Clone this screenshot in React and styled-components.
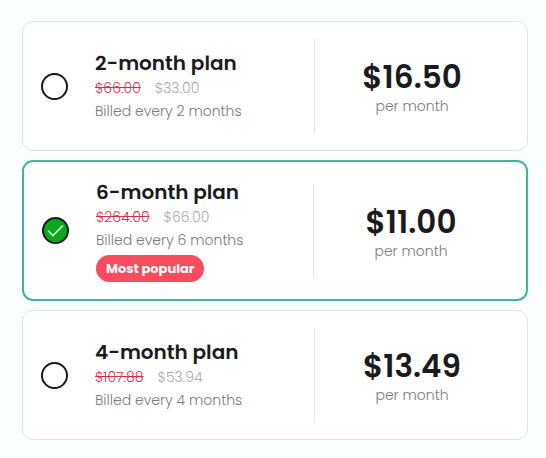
import React, { useState } from "react";
import styled, { createGlobalStyle } from "styled-components";

const plans = [
  { id: "2", title: "2-month plan", old: "$66.00", now: "$33.00", billed: "Billed every 2 months", price: "$16.50" },
  { id: "6", title: "6-month plan", old: "$264.00", now: "$66.00", billed: "Billed every 6 months", price: "$11.00", popular: true },
  { id: "4", title: "4-month plan", old: "$107.88", now: "$53.94", billed: "Billed every 4 months", price: "$13.49" },
];

const App = () => {
  const [selected, setSelected] = useState("6");

  return (
    <>
      <GlobalStyle />
      <Plans>
        {plans.map((plan) => {
          const active = plan.id === selected;
          return (
            <Card key={plan.id} $active={active}>
              <RadioBox>
                <Radio
                  type="radio"
                  name="plan"
                  value={plan.id}
                  checked={active}
                  onChange={() => setSelected(plan.id)}
                />
                {active && (
                  <Check viewBox="0 0 27 27" aria-hidden="true">
                    <path d="M6 13.6 L11 18.6 L21 8.4" />
                  </Check>
                )}
              </RadioBox>
              <Info>
                <Title>{plan.title}</Title>
                <Prices>
                  <OldPrice>{plan.old}</OldPrice>
                  <NewPrice>{plan.now}</NewPrice>
                </Prices>
                <Billed>{plan.billed}</Billed>
                {plan.popular && <Badge>Most popular</Badge>}
              </Info>
              <Monthly>
                <Amount>{plan.price}</Amount>
                <Per>per month</Per>
              </Monthly>
            </Card>
          );
        })}
      </Plans>
    </>
  );
};

export default App;

const GlobalStyle = createGlobalStyle`
  * {
    box-sizing: border-box;
  }
  body {
    margin: 0;
    background: #fbfefe;
    color: #1b1b1d;
    font-family: "Poppins", "Inter", sans-serif;
  }
`;

const Plans = styled.main`
  display: flex;
  flex-direction: column;
  gap: 9px;
  padding: 21px 18px 17px 22px;
`;

const Card = styled.label`
  display: flex;
  align-items: center;
  padding: 17px 18px;
  background: #ffffff;
  border: ${({ $active }) => ($active ? "2px solid #3fb5a0" : "1px solid #dfe4e6")};
  border-radius: 11px;
  cursor: pointer;
`;

const RadioBox = styled.span`
  position: relative;
  display: flex;
  flex-shrink: 0;
  margin-right: 27px;
`;

const Radio = styled.input`
  appearance: none;
  width: 27px;
  height: 27px;
  margin: 0;
  border: 2px solid #17191a;
  border-radius: 50%;
  background: #ffffff;
  cursor: pointer;

  &:checked {
    background: #08a81c;
  }
`;

const Check = styled.svg`
  position: absolute;
  inset: 0;
  width: 27px;
  height: 27px;
  pointer-events: none;

  path {
    fill: none;
    stroke: #d4f8d4;
    stroke-width: 1.5;
  }
`;

const Info = styled.div`
  flex: 1;
  display: flex;
  flex-direction: column;
  align-items: flex-start;
`;

const Title = styled.span`
  font-size: 20px;
  line-height: 26px;
  font-weight: 600;
`;

const Prices = styled.span`
  display: flex;
  gap: 14px;
  font-size: 14px;
  line-height: 24px;
  font-weight: 300;
`;

const OldPrice = styled.s`
  color: #d8304c;
`;

const NewPrice = styled.span`
  color: #a8a8b0;
`;

const Billed = styled.span`
  font-size: 14px;
  line-height: 23px;
  font-weight: 300;
  color: #7a7a7f;
`;

const Badge = styled.span`
  margin-top: 3px;
  padding: 0 10px;
  border-radius: 14px;
  background: #fb4b5e;
  color: #ffffff;
  font-size: 13px;
  line-height: 27px;
  font-weight: 700;
`;

const Monthly = styled.div`
  flex: 0 0 195px;
  display: flex;
  flex-direction: column;
  align-items: center;
  justify-content: center;
  height: 94px;
  border-left: 1px solid #e3e4e6;
`;

const Amount = styled.span`
  font-size: 31px;
  line-height: 40px;
  font-weight: 600;
`;

const Per = styled.span`
  font-size: 14px;
  line-height: 18px;
  font-weight: 300;
  color: #7a7a7f;
`;
